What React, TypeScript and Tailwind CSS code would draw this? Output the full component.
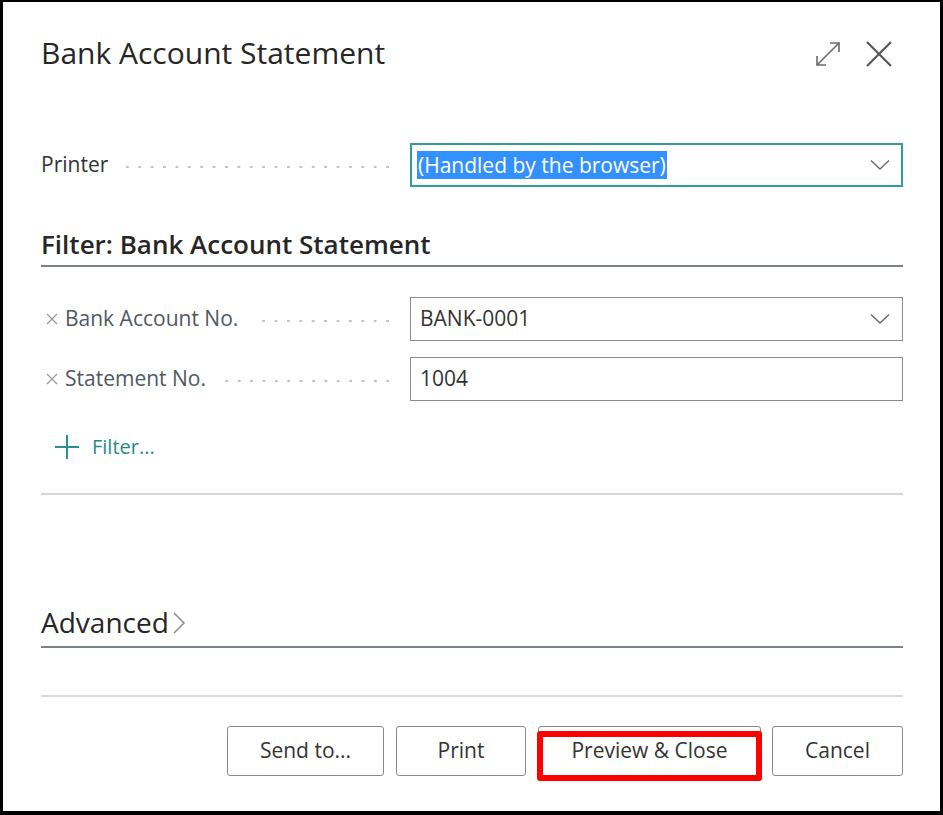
import React from 'react';

const font = { fontFamily: '"Open Sans", "Noto Sans", sans-serif' };

const Dots: React.FC = () => (
  <div className="flex-1 h-[4px] mt-[4px] ml-[16px] bg-[radial-gradient(circle,#c4c4c4_1.1px,transparent_1.6px)] bg-[length:12.4px_4px] bg-repeat-x bg-right" />
);

const Chevron: React.FC = () => (
  <svg width="20" height="12" viewBox="0 0 20 12" className="shrink-0">
    <path d="M1 1.5 L10 10 L19 1.5" fill="none" stroke="#6b6b6b" strokeWidth="1.4" />
  </svg>
);

const FilterRow: React.FC<{ label: string; value: string; dropdown?: boolean }> = ({ label, value, dropdown }) => (
  <div className="flex items-center h-[44px]">
    <div className="w-[353px] flex items-center pl-[5px]">
      <svg width="12" height="12" viewBox="0 0 12 12" className="mr-[7px] shrink-0">
        <g stroke="#9a9a9a" strokeWidth="1.3">
          <path d="M1 1 L11 11" />
          <path d="M11 1 L1 11" />
        </g>
      </svg>
      <span className="text-[21px] text-[#4f5863]">{label}</span>
      <Dots />
    </div>
    <div className="ml-[16px] flex-1 h-full border border-[#8c8c8c] flex items-center justify-between pl-[9px] pr-[12px]">
      <span className="text-[21px] text-[#333]">{value}</span>
      {dropdown && <Chevron />}
    </div>
  </div>
);

const App: React.FC = () => {
  return (
    <div
      style={font}
      className="w-[943px] h-[815px] bg-white border-t-2 border-l-[3px] border-r-[3px] border-b-[4px] border-black pl-[38px] pr-[37px] text-[#333]"
    >
      {/* header */}
      <div className="h-[100px] flex items-start justify-between">
        <h1 className="mt-[31px] text-[30px] leading-[40px] text-[#262626]">Bank Account Statement</h1>
        <div className="mt-[38px] flex items-center gap-[24px] mr-[10px]">
          <svg width="26" height="26" viewBox="0 0 26 26">
            <g fill="none" stroke="#6a6a6a" strokeWidth="1.6">
              <path d="M2 24 L24 2" />
              <path d="M15 2 H24 V11" />
              <path d="M2 15 V24 H11" />
            </g>
          </svg>
          <svg width="28" height="28" viewBox="0 0 28 28">
            <g fill="none" stroke="#555" strokeWidth="2.2">
              <path d="M2 2 L26 26" />
              <path d="M26 2 L2 26" />
            </g>
          </svg>
        </div>
      </div>

      {/* printer */}
      <div className="mt-[41px] flex items-center h-[44px]">
        <div className="w-[353px] flex items-center">
          <span className="text-[21px] text-[#333]">Printer</span>
          <Dots />
        </div>
        <div className="ml-[16px] flex-1 h-full border-2 border-[#2f9e97] flex items-center justify-between pl-[5px] pr-[11px]">
          <span className="text-[21px] leading-[28px] bg-[#3390ff] text-white px-[1px]">(Handled by the browser)</span>
          <Chevron />
        </div>
      </div>

      {/* filter heading */}
      <div className="mt-[40px] h-[40px] flex items-center pb-[4px] border-b-2 border-[#79818e]">
        <h2 className="text-[26px] font-semibold text-[#262626]">Filter: Bank Account Statement</h2>
      </div>

      <div className="mt-[30px] flex flex-col gap-[16px]">
        <FilterRow label="Bank Account No." value="BANK-0001" dropdown />
        <FilterRow label="Statement No." value="1004" />
      </div>

      {/* add filter */}
      <div className="mt-[30px] h-[32px] flex items-center pl-[13px] gap-[12px] text-[#2a8a8a]">
        <svg width="26" height="26" viewBox="0 0 26 26">
          <g stroke="#2a9191" strokeWidth="2">
            <path d="M13 1 V25" />
            <path d="M1 13 H25" />
          </g>
        </svg>
        <span className="text-[20px]">Filter...</span>
      </div>

      <div className="mt-[30px] border-t-2 border-[#d6d6d6]" />

      {/* advanced */}
      <div className="mt-[113px] h-[40px] flex items-center pb-[10px] border-b-2 border-[#79818e]">
        <span className="text-[28px] text-[#262626]">Advanced</span>
        <svg width="14" height="26" viewBox="0 0 14 26" className="ml-[3px] mt-[2px]">
          <path d="M2 3 L12 13 L2 23" fill="none" stroke="#8a8a8a" strokeWidth="1.5" />
        </svg>
      </div>

      <div className="mt-[47px] border-t-2 border-[#d9d9d9]" />

      {/* buttons */}
      <div className="mt-[29px] flex justify-end gap-[12px]">
        <button className="w-[157px] h-[50px] border border-[#8a8a8a] rounded-[3px] text-[21px] text-[#333]">Send to...</button>
        <button className="w-[130px] h-[50px] border border-[#8a8a8a] rounded-[3px] text-[21px] text-[#333]">Print</button>
        <div className="relative w-[223px] h-[50px]">
          <button className="w-full h-full border border-[#8a8a8a] rounded-[3px] text-[21px] text-[#333]">Preview &amp; Close</button>
          <div className="absolute left-[-1px] right-[-1px] top-[5px] bottom-[-5px] border-[6px] border-[#ff0000] rounded-[3px] pointer-events-none" />
        </div>
        <button className="w-[131px] h-[50px] border border-[#8a8a8a] rounded-[3px] text-[21px] text-[#333] ml-[-1px]">Cancel</button>
      </div>
    </div>
  );
};

export default App;
